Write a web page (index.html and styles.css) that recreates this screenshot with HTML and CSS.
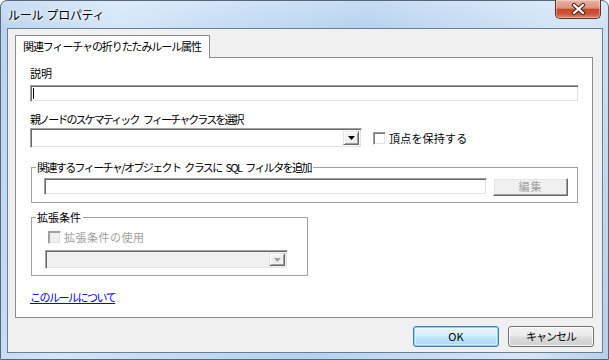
FILE: index.html
```html
<!DOCTYPE html>
<html lang="ja">
<head>
<meta charset="utf-8">
<title>ルール プロパティ</title>
<link rel="stylesheet" href="styles.css">
</head>
<body>
<div class="window">
  <div class="titlebar">
    <span class="title">ルール プロパティ</span>
    <div class="close">
      <svg width="15" height="12" viewBox="0 0 15 12">
        <path d="M3 2 L12 10 M12 2 L3 10" stroke="#3b2a26" stroke-width="4.2" stroke-linecap="round"/>
        <path d="M3 2 L12 10 M12 2 L3 10" stroke="#ffffff" stroke-width="2.2" stroke-linecap="round"/>
      </svg>
    </div>
  </div>
  <div class="client">
    <div class="tabs"><div class="tab">関連フィーチャの折りたたみルール属性</div></div>
    <div class="panel">
      <div class="lbl">説明</div>
      <div class="textbox tb-desc"><span class="caret"></span></div>
      <div class="lbl lbl-parent">親ノードのスケマティック フィーチャクラスを選択</div>
      <div class="row row-parent">
        <div class="combo combo-parent">
          <div class="drop"><svg width="7" height="4" viewBox="0 0 7 4"><path d="M0 0 H7 L3.5 4 Z" fill="#000"/></svg></div>
        </div>
        <div class="check check-keep"><span class="box"></span><span class="check-text">頂点を保持する</span></div>
      </div>
      <fieldset class="group group-sql">
        <legend class="legend-sql">関連するフィーチャ/オブジェクト クラスに SQL フィルタを追加</legend>
        <div class="row row-sql">
          <div class="textbox tb-sql"></div>
          <div class="btn-classic">編集</div>
        </div>
      </fieldset>
      <fieldset class="group group-ext">
        <legend>拡張条件</legend>
        <div class="check check-ext disabled"><span class="box"></span><span class="check-text">拡張条件の使用</span></div>
        <div class="combo combo-ext disabled">
          <div class="drop"><svg width="7" height="4" viewBox="0 0 7 4"><path d="M0 0 H7 L3.5 4 Z" fill="#a0a0a0"/></svg></div>
        </div>
      </fieldset>
      <a class="link" href="#">このルールについて</a>
    </div>
    <div class="buttons">
      <div class="btn btn-ok">OK</div>
      <div class="btn btn-cancel">キャンセル</div>
    </div>
  </div>
</div>
</body>
</html>
```
FILE: styles.css
```css
* { box-sizing: border-box; }
html, body { margin: 0; padding: 0; }
body {
  width: 609px;
  height: 360px;
  overflow: hidden;
  background: #ffffff;
  font-family: "Noto Sans CJK JP", "Noto Sans", sans-serif;
  font-size: 11px;
  color: #000;
}

.window {
  width: 609px;
  height: 360px;
  display: flex;
  flex-direction: column;
  padding: 0 5px 6px 6px;
  border: 1px solid #55687c;
  border-radius: 7px 7px 0 0;
  background:
    linear-gradient(180deg, rgba(255,255,255,0.25) 0, rgba(255,255,255,0) 30px),
    linear-gradient(100deg, #b9d3ee 0%, #d3e5f8 18%, #c3dbf3 35%, #b5d1ee 55%, #c9def4 75%, #d5e5f5 88%, #b6cfe9 100%);
}

.titlebar {
  height: 27px;
  flex: none;
  display: flex;
  justify-content: space-between;
  align-items: flex-start;
}
.title {
  margin: 7px 0 0 1px;
  font-size: 12px;
  line-height: 14px;
  letter-spacing: -0.3px;
  word-spacing: 1px;
  color: #000;
  text-shadow: 0 0 6px #fff, 0 0 3px #fff;
}
.close {
  width: 46px;
  height: 19px;
  margin: -1px 2px 0 0;
  display: flex;
  align-items: center;
  justify-content: center;
  border: 1px solid #5e2f26;
  border-top: none;
  border-radius: 0 0 5px 5px;
  background: linear-gradient(180deg, #eab2a4 0%, #dd907e 45%, #c7472c 52%, #cd553a 78%, #e0866b 100%);
  box-shadow: inset 0 0 0 1px rgba(255,255,255,0.35);
}

.client {
  flex: 1;
  display: flex;
  flex-direction: column;
  background: #f0f0f0;
  border: 1px solid #6b7f94;
  padding: 6px 8px 5px 7px;
}

.tabs { display: flex; flex: none; }
.tab {
  position: relative;
  z-index: 1;
  width: 195px;
  height: 23px;
  margin-bottom: -1px;
  padding: 3px 0 0 7px;
  background: #fff;
  border: 1px solid #898c95;
  border-bottom: none;
  line-height: 14px;
  letter-spacing: -1.1px;
  white-space: nowrap;
}

.panel {
  height: 261px;
  flex: none;
  margin-right: 1px;
  background: #fff;
  border: 1px solid #898c95;
  padding: 8px 0 0 14px;
  display: flex;
  flex-direction: column;
  align-items: flex-start;
}

.lbl {
  height: 14px;
  line-height: 14px;
  white-space: nowrap;
}
.lbl-parent { margin-top: 10px; letter-spacing: -1.9px; word-spacing: 4px; }

.textbox {
  background: #fff;
  border: 1px solid;
  border-color: #a0a0a0 #ffffff #ffffff #a0a0a0;
  box-shadow: inset 1px 1px 0 #696969, inset -1px -1px 0 #e3e3e3;
}
.tb-desc {
  margin-top: 5px;
  width: 549px;
  height: 17px;
  padding: 2px 0 0 2px;
  display: flex;
}
.caret { width: 1px; height: 11px; background: #000; }

.row { display: flex; align-items: center; }
.row-parent { margin-top: 2px; height: 20px; }

.combo {
  background: #fff;
  border: 1px solid;
  border-color: #a0a0a0 #ffffff #ffffff #a0a0a0;
  box-shadow: inset 1px 1px 0 #696969, inset -1px -1px 0 #e3e3e3;
  display: flex;
  justify-content: flex-end;
  padding: 2px;
}
.combo-parent { width: 332px; height: 20px; }
.drop {
  width: 16px;
  height: 100%;
  background: #f0f0f0;
  border: 1px solid;
  border-color: #e3e3e3 #696969 #696969 #e3e3e3;
  box-shadow: inset 1px 1px 0 #fff, inset -1px -1px 0 #a0a0a0;
  display: flex;
  align-items: center;
  justify-content: center;
}

.check { display: flex; align-items: center; height: 14px; white-space: nowrap; }
.check .box {
  width: 13px;
  height: 13px;
  flex: none;
  background: #fff;
  border: 1px solid;
  border-color: #a0a0a0 #ffffff #ffffff #a0a0a0;
  box-shadow: inset 1px 1px 0 #7a7a7a, inset -1px -1px 0 #e3e3e3;
}
.check-text { margin-left: 3px; line-height: 14px; }
.check-keep { margin-left: 11px; }
.check-keep .check-text { letter-spacing: 0.2px; }

.group {
  margin: 0;
  border: 1px solid #a0a0a0;
  min-width: 0;
}
.group legend {
  padding: 0 2px 0 1px;
  line-height: 14px;
  height: 14px;
  white-space: nowrap;
}
.legend-sql { letter-spacing: -1.6px; word-spacing: 3px; }

.group-sql {
  margin: 12px 0 0 1px;
  width: 547px;
  padding: 4px 9px 6px 4px;
}
.row-sql { margin-left: 8px; height: 18px; align-items: flex-start; }
.tb-sql { width: 443px; height: 17px; }
.btn-classic {
  margin-left: 6px;
  width: 75px;
  height: 18px;
  background: #f0f0f0;
  border: 1px solid;
  border-color: #ffffff #696969 #696969 #ffffff;
  box-shadow: inset -1px -1px 0 #a0a0a0, inset 1px 1px 0 #e3e3e3;
  color: #a0a0a0;
  text-align: center;
  line-height: 15px;
  letter-spacing: 1px;
}

.group-ext {
  margin: 7px 0 0 1px;
  width: 277px;
  padding: 6px 0 6px 4px;
}
.check-ext { margin-left: 12px; }
.check-ext .check-text { letter-spacing: 0.5px; }
.disabled .check-text { color: #a0a0a0; }
.disabled .box { background: #f0f0f0; box-shadow: inset 1px 1px 0 #a0a0a0, inset -1px -1px 0 #e3e3e3; }
.combo-ext {
  margin: 6px 0 0 9px;
  width: 243px;
  height: 19px;
}
.combo.disabled { background: #f0f0f0; }

.link {
  margin-top: 14px;
  line-height: 14px;
  height: 14px;
  color: #0000ff;
  text-decoration: underline;
  letter-spacing: -1.5px;
  white-space: nowrap;
}

.buttons {
  flex: none;
  margin-top: 8px;
  display: flex;
  justify-content: flex-end;
  gap: 9px;
}
.btn {
  width: 86px;
  height: 21px;
  border-radius: 3px;
  text-align: center;
  line-height: 19px;
  white-space: nowrap;
}
.btn-ok {
  border: 1px solid #3c7fb1;
  background: linear-gradient(180deg, #e5f4fc 0%, #d9f0fc 48%, #bee6fd 52%, #a7d9f5 100%);
  box-shadow: inset 0 0 0 1px #7fd3f5, inset 0 0 0 2px rgba(255,255,255,0.5);
}
.btn-cancel {
  border: 1px solid #707070;
  background: linear-gradient(180deg, #f2f2f2 0%, #ebebeb 48%, #dddddd 52%, #cfcfcf 100%);
  box-shadow: inset 0 0 0 1px rgba(255,255,255,0.8);
  letter-spacing: -1px;
}
```
